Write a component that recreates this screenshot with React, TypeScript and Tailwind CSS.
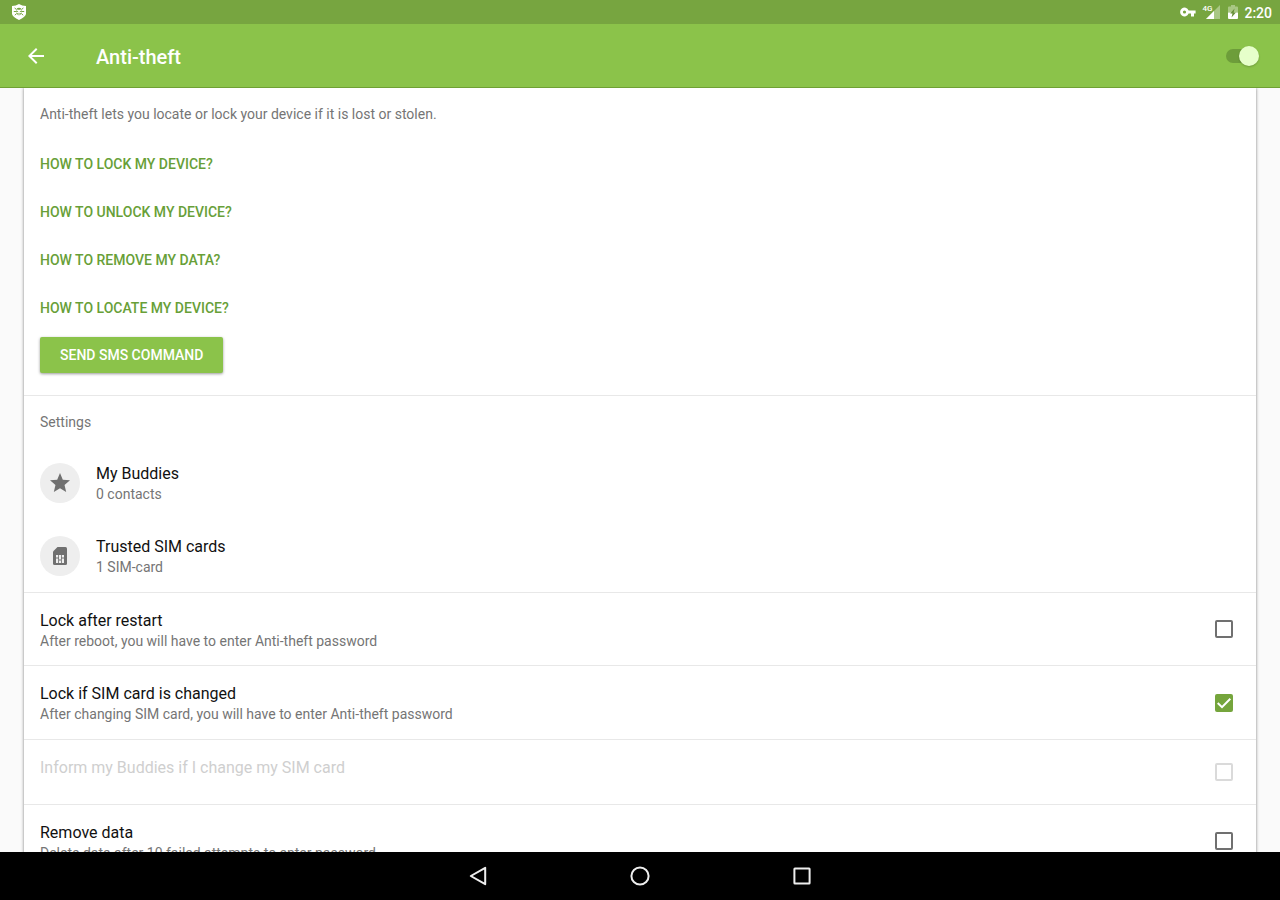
import React, { useState } from "react";

const questions = [
  "HOW TO LOCK MY DEVICE?",
  "HOW TO UNLOCK MY DEVICE?",
  "HOW TO REMOVE MY DATA?",
  "HOW TO LOCATE MY DEVICE?",
];

function ShieldBugIcon() {
  return (
    <svg width="14" height="16" viewBox="0 0 14 16" aria-hidden="true">
      <path d="M7 0 Q10 1.8 14 2 V10 Q13.4 13 7 16 Q0.6 13 0 10 V2 Q4 1.8 7 0Z" fill="#fff" />
      <g stroke="#75a440" fill="none" strokeWidth="1">
        <path d="M2.6 4 4.6 5.6M11.4 4 9.4 5.6M1.8 7.5H4.2M12.2 7.5H9.8M2.8 11.2 4.8 9.4M11.2 11.2 9.2 9.4" />
      </g>
      <path d="M4.6 4.6Q7 2.8 9.4 4.6L8.4 5.8H5.6ZM4.2 6.3 6.5 7.5 4.2 8.5ZM9.8 6.3 7.5 7.5 9.8 8.5ZM5 9.3 6.5 8.8V11.5Q5.3 11 5 9.3ZM9 9.3 7.5 8.8V11.5Q8.7 11 9 9.3Z" fill="#75a440" />
    </svg>
  );
}

function StatusBar() {
  return (
    <div className="flex h-6 items-center justify-between bg-[#77a540] pr-2 pl-3 text-white">
      <ShieldBugIcon />
      <div className="flex items-center">
        <svg width="16" height="10" viewBox="0 0 16 10" aria-hidden="true">
          <path
            d="M8.6 3.4A4.4 4.4 0 1 0 8.6 6.6H11V9.5H14V6.6H15.6V3.4ZM4.5 6.6A1.6 1.6 0 1 1 4.5 3.4A1.6 1.6 0 0 1 4.5 6.6Z"
            fill="#fff"
          />
        </svg>
        <span className="relative ml-[6px] block h-[14px] w-[18px]">
          <svg className="absolute right-0 bottom-0" width="14" height="14" viewBox="0 0 14 14" aria-hidden="true">
            <path d="M14 0V14H0Z" fill="#a9c784" />
            <path d="M8 6V14H0Z" fill="#fff" />
          </svg>
          <span className="absolute -top-px left-0 text-[8px] leading-[9px] font-medium">4G</span>
        </span>
        <svg className="ml-2" width="10" height="14" viewBox="0 0 10 14" aria-hidden="true">
          <path d="M3 0H7V1.5H9Q10 1.5 10 2.5V7.5H0V2.5Q0 1.5 1 1.5H3Z" fill="#a9c784" />
          <path d="M0 7.5H10V13Q10 14 9 14H1Q0 14 0 13Z" fill="#fff" />
          <path d="M6.6 3.6 2.2 8.6H4.5L3.5 12.4 7.9 7.4H5.6Z" fill="#668f37" />
        </svg>
        <span className="ml-[6px] pt-px text-[14px] leading-6 font-medium">2:20</span>
      </div>
    </div>
  );
}

function AppBar() {
  const [on, setOn] = useState(true);
  return (
    <header className="z-10 flex h-16 items-center border-b border-[#6fa034] bg-[#8bc34a] pr-6 pl-6">
      <button type="button" aria-label="Back" className="flex size-6 items-center justify-center">
        <svg width="24" height="24" viewBox="0 0 24 24" aria-hidden="true">
          <path d="M20 11H7.83l5.59-5.59L12 4l-8 8 8 8 1.41-1.41L7.83 13H20z" fill="#fff" />
        </svg>
      </button>
      <h1 className="ml-12 flex-1 pt-0.5 text-[20px] leading-6 font-medium text-white">Anti-theft</h1>
      <input
        type="checkbox"
        role="switch"
        aria-label="Anti-theft"
        checked={on}
        onChange={() => setOn(!on)}
        className="block h-[14px] w-[30px] appearance-none rounded-full bg-[#6d9d3a] before:-mt-[3px] before:-ml-[3px] before:block before:size-5 before:rounded-full before:bg-[#e6ffca] before:shadow-[0_1px_2px_rgba(0,0,0,0.2)] checked:before:ml-[13px]"
      />
    </header>
  );
}

function Buddy({ title, detail, children }: { title: string; detail: string; children: React.ReactNode }) {
  return (
    <a href="#" className="flex h-[73px] items-center px-4">
      <span className="mr-4 flex size-10 items-center justify-center rounded-full bg-[#eee]">{children}</span>
      <span className="pt-[3px]">
        <span className="block text-[16px] leading-5 text-[#111]">{title}</span>
        <span className="block text-[14px] leading-5 text-[#757575]">{detail}</span>
      </span>
    </a>
  );
}

function Option({
  title,
  detail,
  initial = false,
  disabled = false,
}: {
  title: string;
  detail?: string;
  initial?: boolean;
  disabled?: boolean;
}) {
  const [checked, setChecked] = useState(initial);
  return (
    <label
      className={
        disabled
          ? "flex h-[65px] items-center border-t border-[#e8e8e8] pr-[23px] pl-4 text-[#cfcfcf]"
          : "flex h-[73px] items-center border-t border-[#e8e8e8] pr-[23px] pl-4 text-[#111] nth-2:h-[74px]"
      }
    >
      <span className={disabled ? "flex-1 pb-2" : "flex-1 pt-[3px]"}>
        <span className="block text-[16px] leading-5">{title}</span>
        {detail && <span className="block text-[14px] leading-5 text-[#757575]">{detail}</span>}
      </span>
      <span className="grid size-[18px]">
        <input
          type="checkbox"
          checked={checked}
          disabled={disabled}
          onChange={() => setChecked(!checked)}
          className="peer col-start-1 row-start-1 size-[18px] appearance-none rounded-[2px] border-2 border-[#707070] checked:border-[#75a53c] checked:bg-[#75a53c] disabled:border-[#dadada]"
        />
        <svg
          className="pointer-events-none col-start-1 row-start-1 hidden peer-checked:block"
          width="18"
          height="18"
          viewBox="0 0 18 18"
          aria-hidden="true"
        >
          <path d="M2.7 9 7 13.2 15.3 4.8" fill="none" stroke="#fff" strokeWidth="2" />
        </svg>
      </span>
    </label>
  );
}

function NavBar() {
  return (
    <nav className="flex h-12 shrink-0 items-center justify-center gap-[138px] bg-black">
      <button type="button" aria-label="Back" className="flex size-6 items-center justify-center">
        <svg width="24" height="24" viewBox="0 0 24 24" fill="none" stroke="#eee" strokeWidth="2" aria-hidden="true">
          <path d="M19.2 3.8V20.2L4.8 12Z" strokeLinejoin="round" />
        </svg>
      </button>
      <button type="button" aria-label="Home" className="flex size-6 items-center justify-center">
        <svg width="24" height="24" viewBox="0 0 24 24" fill="none" stroke="#eee" strokeWidth="2" aria-hidden="true">
          <circle cx="12" cy="12" r="8.6" />
        </svg>
      </button>
      <button type="button" aria-label="Recent apps" className="flex size-6 items-center justify-center">
        <svg width="24" height="24" viewBox="0 0 24 24" fill="none" stroke="#eee" strokeWidth="2" aria-hidden="true">
          <rect x="4.4" y="4.6" width="15.2" height="14.8" rx="0.5" />
        </svg>
      </button>
    </nav>
  );
}

export default function App() {
  return (
    <div className="flex h-screen flex-col bg-[#fafafa] font-[Roboto,sans-serif]">
      <StatusBar />
      <AppBar />
      <main className="min-h-0 flex-1 overflow-hidden px-6">
        <div className="min-h-full bg-white shadow-[0_0_3px_rgba(0,0,0,0.5)]">
          <section className="px-4 pt-4 pb-[22px]">
            <p className="text-[14px] leading-5 text-[#757575]">
              Anti-theft lets you locate or lock your device if it is lost or stolen.
            </p>
            <ul className="pt-4">
              {questions.map((question) => (
                <li key={question} className="h-12">
                  <a href="#" className="flex h-12 items-center text-[14px] leading-5 font-medium text-[#689f38]">
                    {question}
                  </a>
                </li>
              ))}
            </ul>
            <button
              type="button"
              className="mt-[5px] block h-9 rounded-[2px] bg-[#8bc34a] px-5 text-[14px] leading-5 font-medium text-white shadow-[0_1px_3px_rgba(0,0,0,0.4)]"
            >
              SEND SMS COMMAND
            </button>
          </section>
          <section className="border-t border-[#e8e8e8] pt-4">
            <h2 className="mb-[14px] px-4 text-[14px] leading-5 text-[#757575]">Settings</h2>
            <Buddy title="My Buddies" detail="0 contacts">
              <svg width="24" height="24" viewBox="0 0 24 24" aria-hidden="true">
                <path
                  d="M12 17.27 18.18 21l-1.64-7.03L22 9.24l-7.19-.61L12 2 9.19 8.63 2 9.24l5.46 4.73L5.82 21z"
                  fill="#707070"
                />
              </svg>
            </Buddy>
            <Buddy title="Trusted SIM cards" detail="1 SIM-card">
              <svg width="14" height="18" viewBox="0 0 14 18" aria-hidden="true">
                <path d="M4.5 0H12.5Q14 0 14 1.5V16.5Q14 18 12.5 18H1.5Q0 18 0 16.5V4.5Z" fill="#707070" />
                <path
                  d="M3 8H5.2V10.5H3ZM3 11.5H5.2V16H3ZM6 8H8V12.5H6ZM6 13.5H8V16H6ZM8.8 8H11V10.5H8.8ZM8.8 11.5H11V16H8.8Z"
                  fill="#eee"
                />
              </svg>
            </Buddy>
          </section>
          <section>
            <Option title="Lock after restart" detail="After reboot, you will have to enter Anti-theft password" />
            <Option
              title="Lock if SIM card is changed"
              detail="After changing SIM card, you will have to enter Anti-theft password"
              initial
            />
            <Option title="Inform my Buddies if I change my SIM card" disabled />
            <Option title="Remove data" detail="Delete data after 10 failed attempts to enter password" />
          </section>
        </div>
      </main>
      <NavBar />
    </div>
  );
}
